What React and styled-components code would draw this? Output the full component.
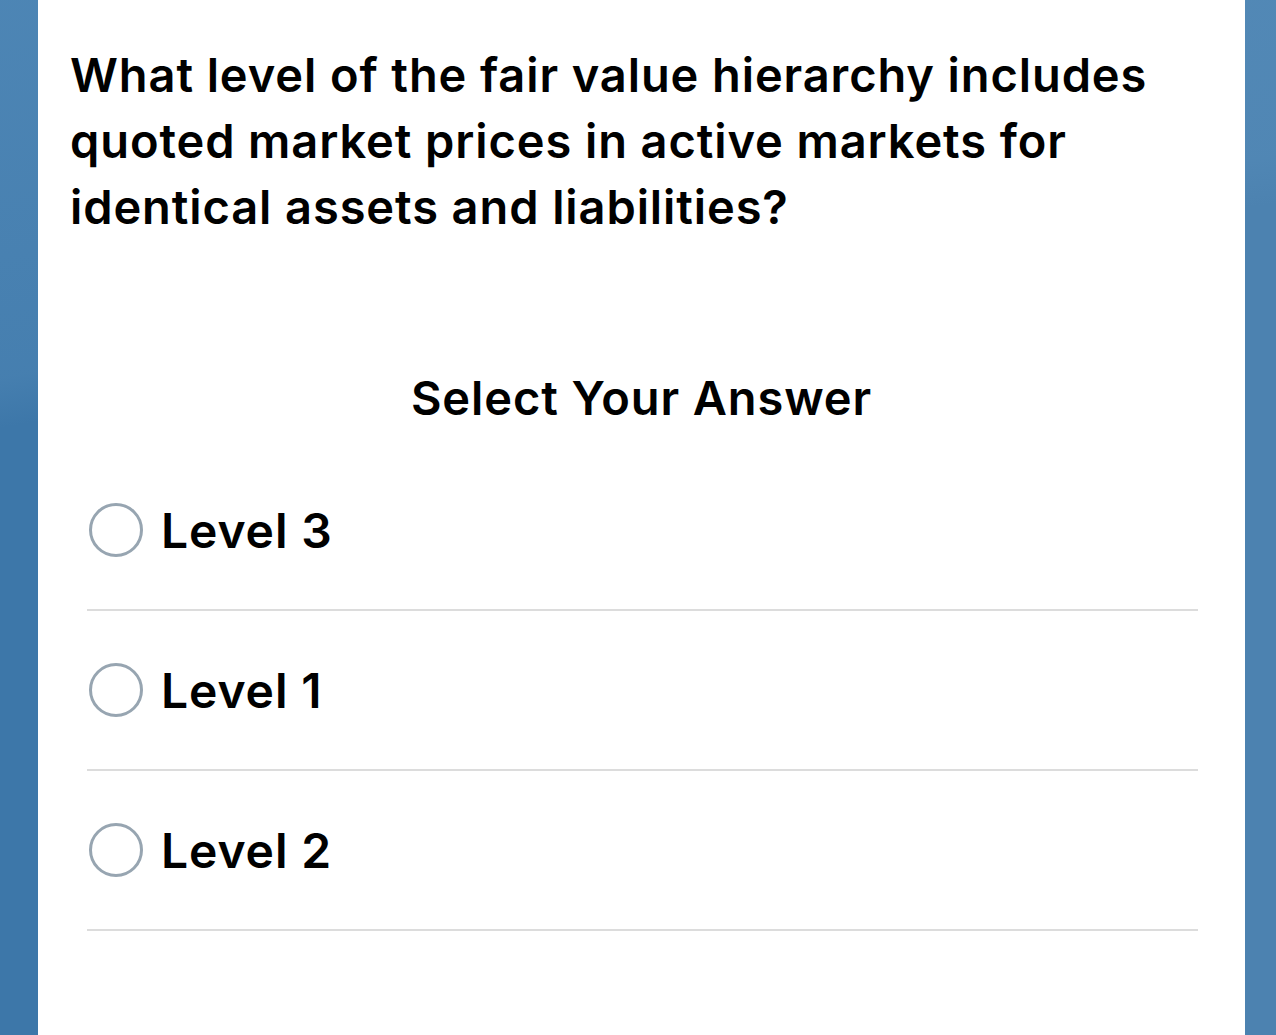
import React from 'react';
import styled, {createGlobalStyle} from 'styled-components';

const GlobalStyle = createGlobalStyle`
   html, body {
      margin: 0;
      padding: 0;
      height: 100%;
   }
   body {
      background:
         linear-gradient(170deg, rgba(90, 145, 190, 0.55) 0%, rgba(90, 145, 190, 0.3) 30%, rgba(90, 145, 190, 0) 34%),
         linear-gradient(to right, #3d77a9 0%, #3d77a9 5%, #4c82b0 95%, #4c82b0 100%);
      font-family: Inter, "Noto Sans", "Liberation Sans", sans-serif;
      color: #000;
   }
   #root {
      min-height: 100vh;
   }
`;

const Page = styled.div`
   display: flex;
   justify-content: flex-start;
   min-height: 100vh;
   padding-left: 38px;
`;

const Card = styled.main`
   width: 1207px;
   min-height: 1035px;
   background: #fff;
   box-sizing: border-box;
   padding: 42px 47px 0 32px;
`;

const Question = styled.h1`
   margin: 0;
   font-size: 47px;
   line-height: 66px;
   font-weight: 600;
   letter-spacing: 0.9px;
`;

const Prompt = styled.h2`
   margin: 130px 0 0;
   font-size: 47px;
   line-height: 56px;
   font-weight: 600;
   text-align: center;
   letter-spacing: 0.9px;
   padding-left: 15px;
`;

const OptionList = styled.ul`
   list-style: none;
   margin: 25px 0 0 17px;
   padding: 0;
`;

const OptionRow = styled.li`
   display: flex;
   align-items: center;
   gap: 18px;
   height: 158px;
   padding: 0 2px;
   border-bottom: 2px solid #dcdcdc;
`;

const Radio = styled.span`
   width: 48px;
   height: 48px;
   border-radius: 50%;
   border: 3px solid #97a5b1;
   flex-shrink: 0;
`;

const Label = styled.span`
   font-size: 48px;
   font-weight: 600;
   letter-spacing: 0.9px;
`;

const options = ['Level 3', 'Level 1', 'Level 2'];

export default function App() {
   return <>
      <GlobalStyle/>
      <Page>
         <Card>
            <Question>
               What level of the fair value hierarchy includes quoted market prices in active markets for identical assets and liabilities?
            </Question>
            <Prompt>Select Your Answer</Prompt>
            <OptionList>
               {options.map(option => <OptionRow key={option}>
                  <Radio/>
                  <Label>{option}</Label>
               </OptionRow>)}
            </OptionList>
         </Card>
      </Page>
   </>;
}
